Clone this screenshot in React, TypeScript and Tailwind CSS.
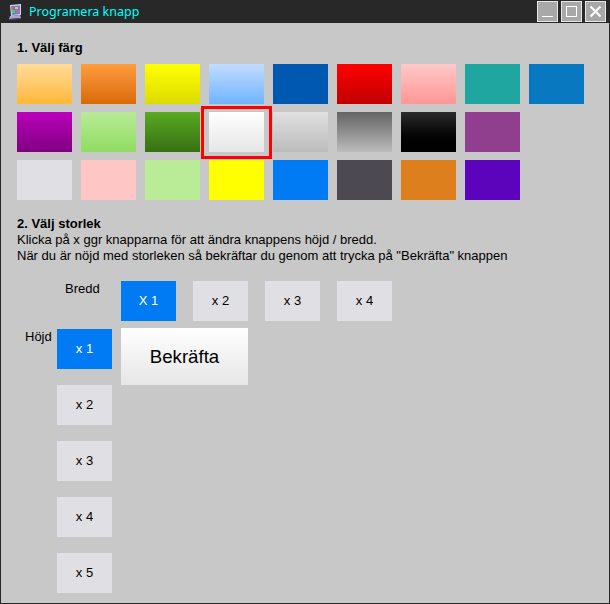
import React from "react";

const row1 = [
  "bg-gradient-to-b from-[#ffdc96] to-[#ffb832]",
  "bg-gradient-to-b from-[#ff9c3c] to-[#d96a00]",
  "bg-gradient-to-b from-[#ffff00] to-[#dcdc00]",
  "bg-gradient-to-b from-[#c0dcff] to-[#70b4ff]",
  "bg-[#0058b0]",
  "bg-gradient-to-b from-[#ff0000] to-[#c00000]",
  "bg-gradient-to-b from-[#ffc8c8] to-[#ff9696]",
  "bg-[#1fa6a0]",
  "bg-[#0878c0]",
];

const row2 = [
  "bg-gradient-to-b from-[#bc00bc] to-[#800080]",
  "bg-gradient-to-b from-[#b9eb96] to-[#90dc60]",
  "bg-gradient-to-b from-[#58aa20] to-[#387014]",
  "bg-gradient-to-b from-[#ffffff] to-[#e6e6e6]",
  "bg-gradient-to-b from-[#e0e0e0] to-[#bcbcbc]",
  "bg-gradient-to-b from-[#646464] to-[#bcbcbc]",
  "bg-gradient-to-b from-[#2c2c2c] to-[#000000]",
  "bg-[#903f8f]",
];

const row3 = [
  "bg-[#e0dfe4]",
  "bg-[#ffc6c6]",
  "bg-[#baec98]",
  "bg-[#ffff00]",
  "bg-[#007bf4]",
  "bg-[#4c4953]",
  "bg-[#dc7f1c]",
  "bg-[#5c03bc]",
];

function Swatch({ color, selected }: { color: string; selected?: boolean }) {
  return (
    <div className={`relative w-[55px] h-10 ${color}`}>
      {selected && (
        <div className="absolute -left-2 -top-[6px] w-[71px] h-[53px] border-[3px] border-[#ff0000]" />
      )}
    </div>
  );
}

function SizeButton({ label, active }: { label: string; active?: boolean }) {
  return (
    <button
      className={`w-[55px] h-10 flex items-center justify-center text-[13px] ${
        active ? "bg-[#007bf4] text-white" : "bg-[#e0dfe4] text-black"
      }`}
    >
      {label}
    </button>
  );
}

export default function App() {
  return (
    <div className="w-[610px] h-[604px] bg-[#c8c8c8] border-x border-b border-[#282828] flex flex-col font-['Liberation_Sans',Arial,sans-serif] text-[13px] text-black overflow-hidden">
      {/* Title bar */}
      <div className="h-[23px] shrink-0 -mx-px bg-[#282828] flex items-center pl-[8px] pr-[4px]">
        <svg width="14" height="16" viewBox="0 0 14 16" className="shrink-0">
          <path d="M2 1L13 0V11L3 12Z" fill="#d8d8ec" />
          <path d="M3 2L12 1.5V10L4 11Z" fill="#6a7fc0" />
          <rect x="4" y="3" width="2" height="2" fill="#e85858" />
          <rect x="7" y="3" width="3" height="2" fill="#f0c040" />
          <rect x="4" y="6" width="3" height="3" fill="#58c878" />
          <rect x="8" y="6" width="3" height="3" fill="#c860c0" />
          <path d="M2 12L12 11L13 14L1 15Z" fill="#a8a8c8" />
          <path d="M1 15L13 14V15L2 16Z" fill="#50507c" />
        </svg>
        <span className="ml-[7px] mt-[2px] text-[#00ffff] text-[12.5px] font-['Noto_Sans',sans-serif]">Programera knapp</span>
        <div className="ml-auto flex gap-[3px]">
          <div className="w-[21px] h-[21px] bg-[#a8a8a8] border border-[#e8e8e8] flex items-end justify-center pb-[4px]">
            <div className="w-[11px] h-px bg-white" />
          </div>
          <div className="w-[21px] h-[21px] bg-[#a8a8a8] border border-[#e8e8e8] flex items-center justify-center">
            <div className="w-[11px] h-[11px] border border-white" />
          </div>
          <div className="w-[21px] h-[21px] bg-[#a8a8a8] border border-[#e8e8e8] flex items-center justify-center">
            <svg width="13" height="13" viewBox="0 0 13 13">
              <path d="M1.5 1.5L11.5 11.5M11.5 1.5L1.5 11.5" stroke="#fff" strokeWidth="2" />
            </svg>
          </div>
        </div>
      </div>

      <div className="flex-1 pl-4 pt-[18px]">
        <div className="font-bold leading-[14px]">1. Välj färg</div>

        <div className="mt-[9px] flex flex-col gap-2">
          <div className="flex gap-[9px]">
            {row1.map((c) => (
              <Swatch key={c} color={c} />
            ))}
          </div>
          <div className="flex gap-[9px]">
            {row2.map((c, i) => (
              <Swatch key={c} color={c} selected={i === 3} />
            ))}
          </div>
          <div className="flex gap-[9px]">
            {row3.map((c) => (
              <Swatch key={c} color={c} />
            ))}
          </div>
        </div>

        <div className="mt-[16px] font-bold leading-[16px]">2. Välj storlek</div>
        <div className="leading-4">Klicka på x ggr knapparna för att ändra knappens höjd / bredd.</div>
        <div className="leading-4">När du är nöjd med storleken så bekräftar du genom att trycka på "Bekräfta" knappen</div>

        <div className="mt-[17px] flex">
          <div className="w-[48px]" />
          <div className="w-[56px] leading-4">Bredd</div>
          <div className="flex gap-[17px]">
            <SizeButton label="X 1" active />
            <SizeButton label="x 2" />
            <SizeButton label="x 3" />
            <SizeButton label="x 4" />
          </div>
        </div>

        <div className="mt-[8px] flex">
          <div className="w-10 pl-2 leading-4">Höjd</div>
          <div className="flex flex-col gap-4">
            <SizeButton label="x 1" active />
            <SizeButton label="x 2" />
            <SizeButton label="x 3" />
            <SizeButton label="x 4" />
            <SizeButton label="x 5" />
          </div>
          <button className="ml-[9px] -mt-px w-[127px] h-[57px] bg-gradient-to-b from-white to-[#e6e6e6] text-[18.67px] flex items-center justify-center">
            Bekräfta
          </button>
        </div>
      </div>
    </div>
  );
}
